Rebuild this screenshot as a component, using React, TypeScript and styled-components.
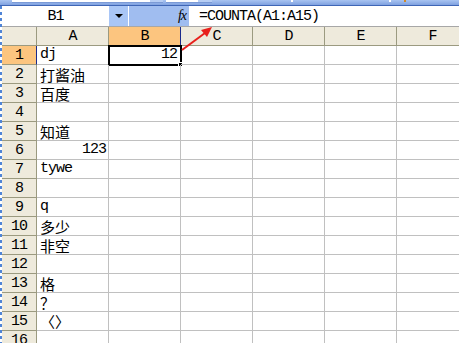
import React from "react";
import styled, { createGlobalStyle, css } from "styled-components";

const GlobalStyle = createGlobalStyle`
  html, body {
    margin: 0;
    padding: 0;
    background: #ffffff;
  }
  * {
    box-sizing: border-box;
  }
`;

const Window = styled.div`
  position: relative;
  width: 459px;
  height: 343px;
  overflow: hidden;
  display: flex;
  flex-direction: column;
  background: #ffffff;
  font-family: "Liberation Mono", "Noto Sans CJK SC", monospace;
  color: #000;
`;

const Toolbar = styled.div`
  height: 6px;
  flex: none;
  display: flex;
  align-items: flex-start;
  background: linear-gradient(#a9c4f1, #7fa1e0);
  border-bottom: 1px solid #3f66b6;
`;

const ComboEdge = styled.div<{ $left: number; $w: number; $tone?: "white" | "blue" }>`
  margin-left: ${(p) => p.$left}px;
  width: ${(p) => p.$w}px;
  height: 3px;
  background: ${(p) => (p.$tone === "blue" ? "#b6cdf4" : "#ffffff")};
  border-bottom: 1px solid #7b9ad6;
`;

const Tick = styled.div<{ $left: number; $color?: string }>`
  margin-left: ${(p) => p.$left}px;
  width: 2px;
  height: 2px;
  background: ${(p) => p.$color ?? "#ffffff"};
`;

const Main = styled.div`
  flex: 1;
  display: flex;
  min-height: 0;
`;

const Rail = styled.div`
  width: 2px;
  flex: none;
  background: repeating-linear-gradient(to bottom, #4f84d6 0 3px, #ffffff 3px 6px);
`;

const Content = styled.div`
  flex: 1;
  display: flex;
  flex-direction: column;
  min-width: 0;
`;

const FormulaBar = styled.div`
  height: 21px;
  flex: none;
  display: flex;
  border-bottom: 1px solid #a7a7a7;
`;

const NameBox = styled.div`
  width: 107px;
  display: flex;
  align-items: center;
  justify-content: center;
  font-size: 15px;
  letter-spacing: -1px;
  padding-top: 1px;
`;

const DropButton = styled.div`
  width: 20px;
  background: #a9c6f6;
  display: flex;
  align-items: center;
  justify-content: center;
  border-right: 1px solid #ffffff;
`;

const Caret = styled.div`
  width: 0;
  height: 0;
  border-left: 4px solid transparent;
  border-right: 4px solid transparent;
  border-top: 4px solid #000;
`;

const FxArea = styled.div`
  width: 60px;
  background: #a0bdf0;
  display: flex;
  align-items: center;
  justify-content: flex-end;
  padding-right: 3px;
  font-family: "Liberation Serif", serif;
  font-style: italic;
  font-size: 14px;
  letter-spacing: -1px;
`;

const FormulaInput = styled.div`
  flex: 1;
  display: flex;
  align-items: center;
  padding-left: 10px;
  padding-top: 1px;
  font-size: 15px;
  letter-spacing: -1px;
  white-space: nowrap;
`;

const Sheet = styled.div`
  display: grid;
  grid-template-columns: 35px repeat(6, 72px);
  grid-auto-rows: 19px;
`;

const headBase = css`
  background: #eeeadc;
  display: flex;
  align-items: center;
  justify-content: center;
  font-size: 15px;
  letter-spacing: -1px;
  padding-top: 1px;
`;

const ColHead = styled.div<{ $selected?: boolean }>`
  ${headBase};
  border-right: 1px solid #9b9a80;
  border-bottom: 1px solid #9b9a80;
  ${(p) =>
    p.$selected &&
    css`
      background: #fcc57f;
      border-right-color: #1a2a8c;
      border-bottom-color: #1a2a8c;
    `}
`;

const RowHead = styled.div<{ $selected?: boolean }>`
  ${headBase};
  border-right: 1px solid #9b9a80;
  border-bottom: 1px solid #9b9a80;
  ${(p) =>
    p.$selected &&
    css`
      background: #fcc57f;
      border-right-color: #1a2a8c;
    `}
`;

const Cell = styled.div<{ $align?: "left" | "right"; $cjk?: boolean; $active?: boolean }>`
  position: relative;
  border-right: 1px solid #c0c0c0;
  border-bottom: 1px solid #c0c0c0;
  display: flex;
  align-items: flex-end;
  justify-content: ${(p) => (p.$align === "right" ? "flex-end" : "flex-start")};
  padding: 0 2px 1px 3px;
  font-size: 15px;
  letter-spacing: -1px;
  line-height: 16px;
  white-space: nowrap;
  ${(p) =>
    p.$cjk &&
    css`
      font-family: "Noto Sans CJK SC", sans-serif;
      letter-spacing: 0;
      font-size: 15px;
      line-height: 16px;
      padding-bottom: 0;
    `}
  ${(p) =>
    p.$active &&
    css`
      outline: 2px solid #000;
      outline-offset: -1px;
      padding-right: 3px;
    `}
`;

const FillHandle = styled.span`
  position: absolute;
  right: -3px;
  bottom: -3px;
  width: 5px;
  height: 5px;
  background: #000;
  border: 1px solid #fff;
`;

const ArrowLayer = styled.svg`
  position: absolute;
  left: 0;
  top: 0;
  pointer-events: none;
`;

type Row = { a?: string; aCjk?: boolean; aRight?: boolean; b?: string };

const rows: Row[] = [
  { a: "dj", b: "12" },
  { a: "打酱油", aCjk: true },
  { a: "百度", aCjk: true },
  {},
  { a: "知道", aCjk: true },
  { a: "123", aRight: true },
  { a: "tywe" },
  {},
  { a: "q" },
  { a: "多少", aCjk: true },
  { a: "非空", aCjk: true },
  {},
  { a: "格", aCjk: true },
  { a: "？", aCjk: true },
  { a: "〈〉", aCjk: true },
  {},
];

const columns = ["A", "B", "C", "D", "E", "F"];

export default function App() {
  return (
    <>
      <GlobalStyle />
      <Window>
        <Toolbar>
          <ComboEdge $left={12} $w={138} />
          <ComboEdge $left={0} $w={13} $tone="blue" />
          <ComboEdge $left={3} $w={32} />
          <ComboEdge $left={0} $w={14} $tone="blue" />
          <Tick $left={79} />
          <Tick $left={96} />
          <Tick $left={13} $color="#d08a2a" />
        </Toolbar>
        <Main>
          <Rail />
          <Content>
            <FormulaBar>
              <NameBox>B1</NameBox>
              <DropButton>
                <Caret />
              </DropButton>
              <FxArea>fx</FxArea>
              <FormulaInput>=COUNTA(A1:A15)</FormulaInput>
            </FormulaBar>
            <Sheet>
              <ColHead />
              {columns.map((c) => (
                <ColHead key={c} $selected={c === "B"}>
                  {c}
                </ColHead>
              ))}
              {rows.map((r, i) => (
                <React.Fragment key={i}>
                  <RowHead $selected={i === 0}>{i + 1}</RowHead>
                  <Cell $cjk={r.aCjk} $align={r.aRight ? "right" : "left"}>
                    {r.a}
                  </Cell>
                  <Cell $align="right" $active={i === 0}>
                    {r.b}
                    {i === 0 && <FillHandle />}
                  </Cell>
                  <Cell />
                  <Cell />
                  <Cell />
                  <Cell />
                </React.Fragment>
              ))}
            </Sheet>
          </Content>
        </Main>
        <ArrowLayer width="459" height="343" viewBox="0 0 459 343">
          <line x1="182" y1="50" x2="205" y2="33" stroke="#e8201c" strokeWidth="2" />
          <polygon points="212,27 201,30 207,37" fill="#e8201c" />
        </ArrowLayer>
      </Window>
    </>
  );
}
